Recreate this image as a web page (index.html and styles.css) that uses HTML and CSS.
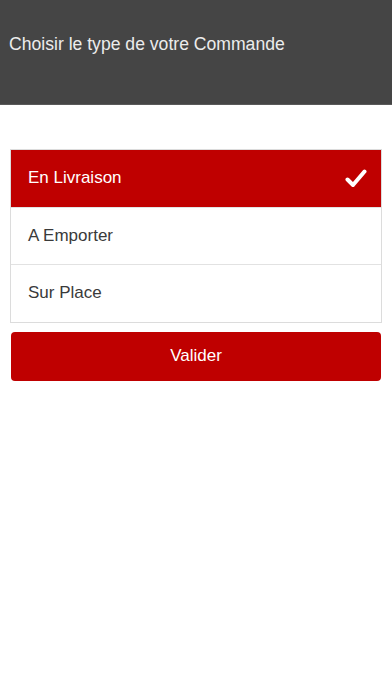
FILE: index.html
```html
<!DOCTYPE html>
<html lang="fr">
<head>
    <meta charset="UTF-8">
    <meta name="viewport" content="width=device-width, initial-scale=1.0">
    <title>Type de commande</title>
    <link rel="stylesheet" href="styles.css">
</head>
<body>
    <div class="entete">
        <h1>Choisir le type de votre Commande</h1>
    </div>
    <div class="contenu">
        <ul class="choix">
            <li class="option active">
                <span>En Livraison</span>
                <svg class="coche" width="22" height="19" viewBox="0 0 22 19">
                    <path d="M2.5 10.5 L8 16 L19.5 2.5" fill="none" stroke="#fff" stroke-width="4" stroke-linecap="round" stroke-linejoin="round"/>
                </svg>
            </li>
            <li class="option"><span>A Emporter</span></li>
            <li class="option"><span>Sur Place</span></li>
        </ul>
        <button type="button" class="valider">Valider</button>
    </div>
</body>
</html>
```
FILE: styles.css
```css
body {
    margin: 0;
    font-family: "Liberation Sans", Arial, sans-serif;
    background: #fff;
}
.entete {
    height: 104px;
    background: #454545;
    border-bottom: 1px solid #5a5a5a;
    display: flex;
    align-items: center;
    padding: 0 9px;
}
.entete h1 {
    margin: 0;
    font-size: 17.6px;
    font-weight: normal;
    color: #ececec;
    margin-top: -16px;
}
.contenu {
    padding: 44px 10px 0 10px;
}
.choix {
    list-style: none;
    margin: 0;
    padding: 0;
    border: 1px solid #dcdcdc;
}
.option {
    height: 56.5px;
    display: flex;
    align-items: center;
    justify-content: space-between;
    padding: 0 14px 0 17px;
    font-size: 17px;
    color: #3a3a3a;
    border-top: 1px solid #e2e2e2;
}
.option:first-child {
    border-top: none;
}
.option.active {
    background: #bf0000;
    color: #fff;
}
.valider {
    display: block;
    width: 370px;
    height: 49px;
    margin: 9px 1px 0 1px;
    border: none;
    border-radius: 4px;
    background: #bf0000;
    color: #fff;
    font-family: "Liberation Sans", Arial, sans-serif;
    font-size: 17px;
}
```
